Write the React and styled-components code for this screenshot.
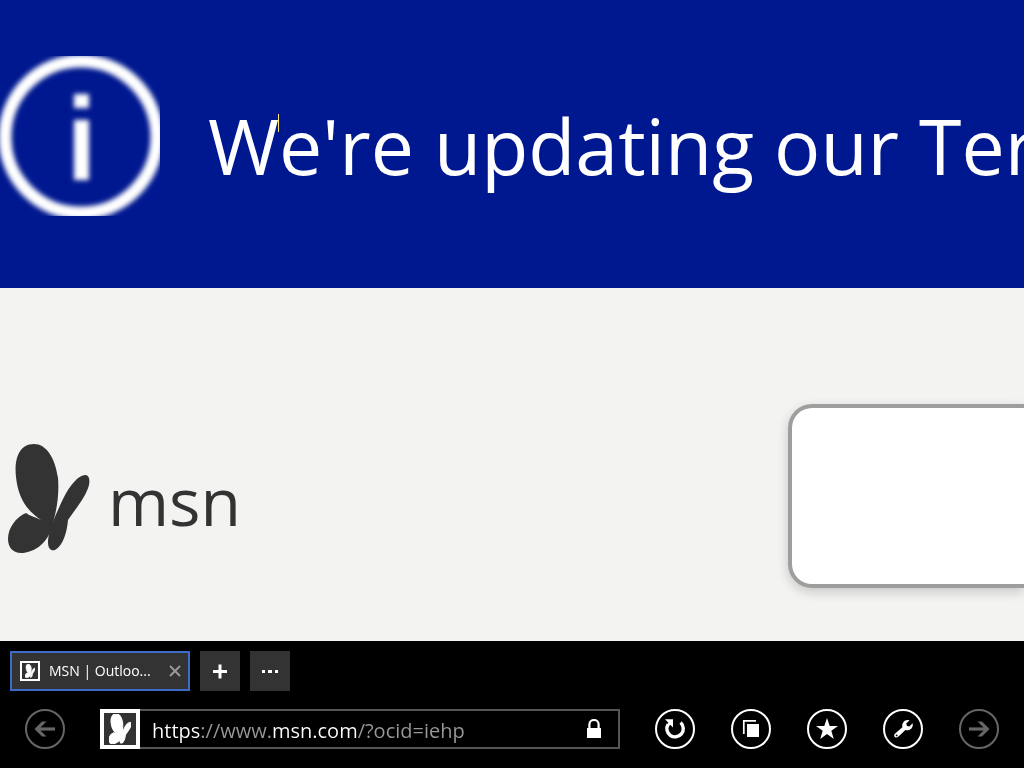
import React, { useState } from 'react';
import styled, { createGlobalStyle } from 'styled-components';

const Butterfly = () => (
  <svg viewBox="0 0 82 110" fill="currentColor" aria-hidden="true">
    <path d="M26 0C11 0 6 15 8 33C10 53 18 66 33 76C27 73 22 72 18 69C8 73 0 84 0 95C0 104 6 110 15 109C31 107 43 95 46 75C50 60 51 46 50 34C47 13 38 0 26 0Z" />
    <path d="M78 31C72 30 62 40 55 55C47 72 40 88 40 98C40 105 43 107 47 106C55 102 59 88 60 76C68 64 78 53 81 41C82 35 81 32 78 31Z" />
  </svg>
);

const InfoIcon = () => (
  <svg viewBox="0 0 160 160" aria-hidden="true">
    <defs>
      <filter id="soft" x="-10%" y="-10%" width="120%" height="120%">
        <feGaussianBlur stdDeviation="2.5" />
      </filter>
    </defs>
    <g filter="url(#soft)">
      <circle cx="81" cy="81" r="76" fill="none" stroke="#fff" strokeWidth="13" />
      <rect x="74" y="38" width="15" height="14" fill="#fff" />
      <rect x="74" y="64" width="15" height="60" fill="#fff" />
    </g>
  </svg>
);

const BackIcon = () => (
  <svg viewBox="0 0 40 40" aria-hidden="true">
    <path d="M11 18.4H30V21.6H11Z" fill="currentColor" />
    <path d="M21.5 12.5H17L9.5 20L17 27.5H21.5L14 20Z" fill="currentColor" />
  </svg>
);

const ForwardIcon = () => (
  <svg viewBox="0 0 40 40" aria-hidden="true">
    <path d="M10 18.4H29V21.6H10Z" fill="currentColor" />
    <path d="M18.5 12.5H23L30.5 20L23 27.5H18.5L26 20Z" fill="currentColor" />
  </svg>
);

const RefreshIcon = () => (
  <svg viewBox="0 0 40 40" aria-hidden="true">
    <path d="M25.6 13.6A8.2 8.2 0 1 1 13.2 15.2" fill="none" stroke="currentColor" strokeWidth="3.4" />
    <path d="M10 10.2H18V18.4L15.6 16L12.4 16.8L13.2 13.4Z" fill="currentColor" />
  </svg>
);

const TabsIcon = () => (
  <svg viewBox="0 0 40 40" aria-hidden="true">
    <path d="M12.8 25V11.8H25" fill="none" stroke="currentColor" strokeWidth="1.7" />
    <path d="M16 15H28V28H16Z" fill="currentColor" />
  </svg>
);

const StarIcon = () => (
  <svg viewBox="0 0 40 40" aria-hidden="true">
    <path d="M20 9L22.7 17H31L24.3 21.8L26.8 30L20 25L13.2 30L15.7 21.8L9 17H17.3Z" fill="currentColor" />
  </svg>
);

const WrenchIcon = () => (
  <svg viewBox="0 0 40 40" aria-hidden="true">
    <path
      d="M26.5 11.2L23.2 14.5L24 17L26.4 17.6L29.6 14.3C30.4 17.6 28.6 20.8 25.2 21.2C24 21.4 23.2 21.1 22.4 21L15.2 27.8C13.6 29.2 11.6 28.6 11.3 27.2C11 26 11.5 25.3 12.2 24.6L19.4 18.2C18.6 14 21.6 10 26.5 11.2Z"
      fill="currentColor"
    />
    <circle cx="13.6" cy="26.4" r="0.9" fill="#000" />
  </svg>
);

const LockIcon = () => (
  <svg viewBox="0 0 14 20" width="14" height="20" aria-hidden="true">
    <path d="M2.4 10V5.4A4.6 4.4 0 0 1 11.6 5.4V10" fill="none" stroke="#fff" strokeWidth="2.2" />
    <path d="M0 9H14V19H0Z" fill="#fff" />
  </svg>
);

const App = () => {
  const [url, setUrl] = useState('https://www.msn.com/?ocid=iehp');
  const [query, setQuery] = useState('');

  return (
    <Browser>
      <GlobalStyle />
      <Notice>
        <NoticeIcon><InfoIcon /></NoticeIcon>
        <NoticeText>We're updating our Terms</NoticeText>
        <Pointer />
      </Notice>
      <Page>
        <Brand href="#">
          <Butterfly />
          <span>msn</span>
        </Brand>
        <SearchBox
          type="text"
          aria-label="Search the web"
          value={query}
          onChange={(e) => setQuery(e.target.value)}
        />
      </Page>
      <Chrome>
        <TabRow>
          <Tab>
            <TabLink href="#">
              <TabFavicon><Butterfly /></TabFavicon>
              <TabTitle>MSN | Outloo...</TabTitle>
            </TabLink>
            <CloseButton type="button" aria-label="Close tab">
              <svg viewBox="0 0 12 12" aria-hidden="true">
                <path d="M1 1L11 11M11 1L1 11" stroke="currentColor" strokeWidth="2" />
              </svg>
            </CloseButton>
          </Tab>
          <SquareButton type="button" aria-label="New tab">
            <svg viewBox="0 0 40 40" aria-hidden="true">
              <path d="M13 20.5H27M20 13.5V27.5" stroke="#fff" strokeWidth="3" />
            </svg>
          </SquareButton>
          <SquareButton type="button" aria-label="Tab tools">
            <svg viewBox="0 0 40 40" aria-hidden="true">
              <path d="M12 19H15V22H12ZM18 19H22V22H18ZM25 19H28V22H25Z" fill="#fff" />
            </svg>
          </SquareButton>
        </TabRow>
        <NavRow>
          <RoundButton type="button" aria-label="Back" disabled><BackIcon /></RoundButton>
          <AddressBar>
            <SiteIcon><Butterfly /></SiteIcon>
            <AddressInput
              type="text"
              aria-label="Address"
              spellCheck={false}
              value={url}
              onChange={(e) => setUrl(e.target.value)}
            />
            <LockIcon />
          </AddressBar>
          <Actions>
            <RoundButton type="button" aria-label="Refresh"><RefreshIcon /></RoundButton>
            <RoundButton type="button" aria-label="Tabs"><TabsIcon /></RoundButton>
            <RoundButton type="button" aria-label="Favorites"><StarIcon /></RoundButton>
            <RoundButton type="button" aria-label="Page tools"><WrenchIcon /></RoundButton>
            <RoundButton type="button" aria-label="Forward" disabled><ForwardIcon /></RoundButton>
          </Actions>
        </NavRow>
      </Chrome>
    </Browser>
  );
}

export default App;

const GlobalStyle = createGlobalStyle`
  * {
    box-sizing: border-box;
  }

  body {
    margin: 0;
    background-color: #000;
    font-family: 'Open Sans', 'Noto Sans', sans-serif;
  }

  svg {
    display: block;
  }
`;

const Browser = styled.div`
  display: flex;
  flex-direction: column;
  min-height: 100vh;
  overflow: hidden;
`;

const Notice = styled.div`
  position: relative;
  display: flex;
  align-items: flex-start;
  gap: 48px;
  padding: 56px 0 72px;
  background-color: #00188f;
  overflow: hidden;
`;

const NoticeIcon = styled.div`
  flex: none;
  width: 160px;
  height: 160px;
`;

const NoticeText = styled.p`
  margin: 0;
  padding-top: 36px;
  color: #fff;
  font-size: 77px;
  line-height: 108px;
  white-space: nowrap;
`;

/* thin pointer that inverts whatever is under it */
const Pointer = styled.div`
  position: absolute;
  top: 114px;
  left: 278px;
  width: 1px;
  height: 18px;
  background-color: #fff;
  mix-blend-mode: difference;
`;

const Page = styled.main`
  flex: 1;
  display: grid;
  grid-template-columns: 77% 23%;
  align-items: start;
  padding: 116px 0 52px;
  background-color: #f3f3f1;
  overflow: hidden;
`;

const Brand = styled.a`
  display: flex;
  align-items: flex-start;
  gap: 18px;
  padding: 40px 0 0 8px;
  color: #333;
  font-size: 66px;
  line-height: 112px;
  text-decoration: none;

  svg {
    width: 82px;
    height: 110px;
  }
`;

const SearchBox = styled.input`
  width: 100%;
  height: 184px;
  padding: 0 40px;
  border: 4px solid #9e9e9e;
  border-right: 0;
  border-radius: 24px 0 0 24px;
  background-color: #fff;
  box-shadow: 0 4px 12px rgba(0, 0, 0, 0.18);
  font: inherit;
  font-size: 64px;
`;

const Chrome = styled.footer`
  display: flex;
  flex-direction: column;
  gap: 18px;
  padding: 10px 25px 19px 10px;
  background-color: #000;
`;

const TabRow = styled.div`
  display: flex;
  gap: 10px;
`;

const Tab = styled.div`
  display: flex;
  align-items: center;
  justify-content: space-between;
  width: 180px;
  height: 40px;
  padding: 0 7px 0 8px;
  border: 2px solid #3d6cc8;
  background-color: #333;
`;

const TabLink = styled.a`
  display: flex;
  align-items: center;
  gap: 9px;
  color: #fff;
  text-decoration: none;
`;

const TabFavicon = styled.span`
  display: flex;
  justify-content: center;
  width: 20px;
  height: 20px;
  padding: 1px;
  border: 2px solid #fff;
  color: #fff;

  svg {
    height: 14px;
    stroke: currentColor;
    stroke-width: 4;
  }
`;

const TabTitle = styled.span`
  font-size: 14px;
  line-height: 20px;
  white-space: nowrap;
`;

const CloseButton = styled.button`
  width: 12px;
  height: 12px;
  padding: 0;
  border: 0;
  background: none;
  color: #999;
`;

const SquareButton = styled.button`
  width: 40px;
  height: 40px;
  padding: 0;
  border: 0;
  background-color: #333;
`;

const NavRow = styled.div`
  display: flex;
  align-items: center;
  gap: 35px;
  padding-left: 15px;
`;

const RoundButton = styled.button`
  flex: none;
  width: 40px;
  height: 40px;
  padding: 0;
  border: 2px solid currentColor;
  border-radius: 50%;
  background: none;
  color: #fff;

  &:disabled {
    color: #666;
  }

  svg {
    width: 40px;
    height: 40px;
    margin: -2px;
  }
`;

const AddressBar = styled.div`
  flex: 1;
  display: flex;
  align-items: center;
  height: 40px;
  padding-right: 17px;
  border: 2px solid #555;
  border-left: 0;
`;

const SiteIcon = styled.span`
  flex: none;
  display: flex;
  justify-content: center;
  width: 40px;
  height: 40px;
  padding: 1px;
  border: 4px solid #fff;
  background-color: #333;
  color: #fff;

  svg {
    height: 30px;
    stroke: currentColor;
    stroke-width: 4;
  }
`;

/* the domain is bright, the rest of the address is dimmed */
const AddressInput = styled.input`
  flex: 1;
  min-width: 0;
  height: 36px;
  padding: 2px 12px 0;
  border: 0;
  outline: 0;
  background: linear-gradient(
    to right,
    #fff 60px,
    #999 60px 131px,
    #fff 131px 218px,
    #999 218px
  );
  background-clip: text;
  -webkit-text-fill-color: transparent;
  caret-color: #fff;
  font: inherit;
  font-size: 20px;
`;

const Actions = styled.div`
  display: flex;
  gap: 36px;
`;
